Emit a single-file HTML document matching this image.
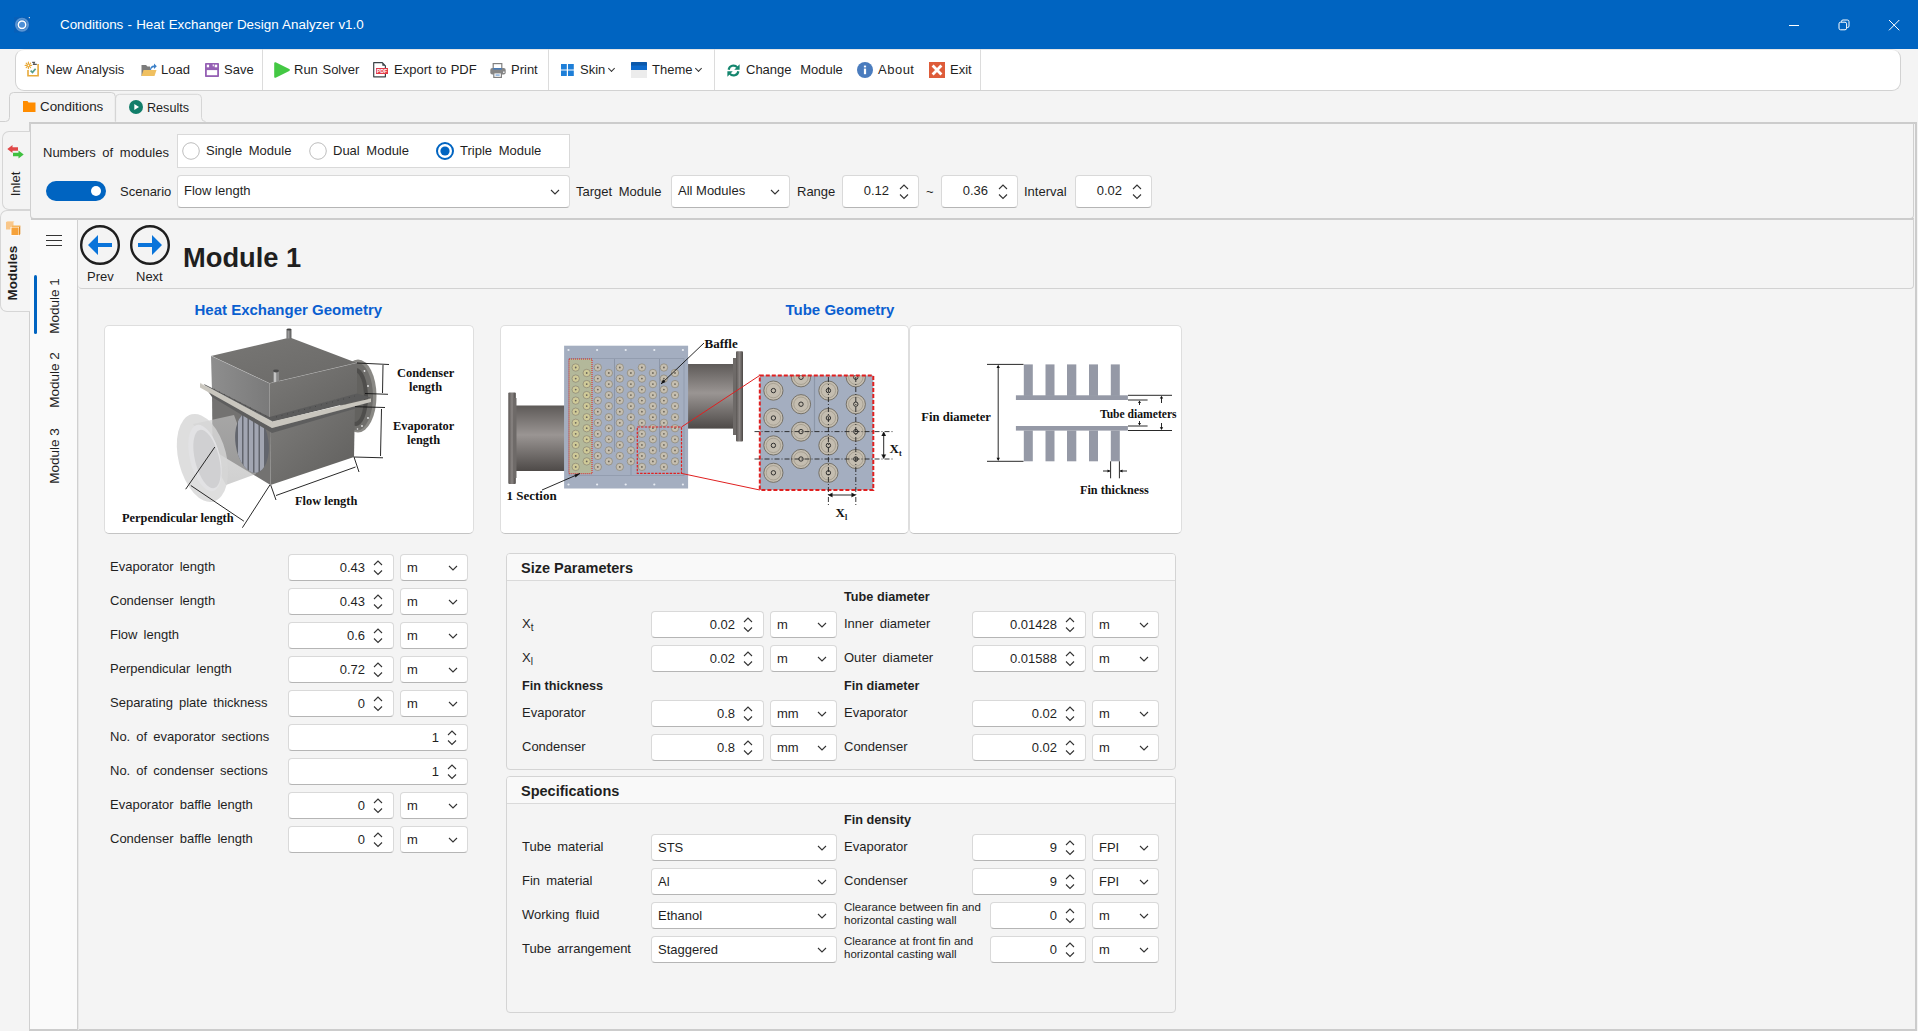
<!DOCTYPE html>
<html><head><meta charset="utf-8">
<style>
*{box-sizing:border-box;margin:0;padding:0}
html,body{width:1918px;height:1031px;overflow:hidden;background:#f4f4f4;font-family:"Liberation Sans",sans-serif;font-size:13px;color:#1f1f1f}
.a{position:absolute}
.t{position:absolute;white-space:nowrap;line-height:16px}
#title{left:0;top:0;width:1918px;height:49px;background:#0064c1}
#toolbar{left:15px;top:49px;width:1886px;height:42px;background:#fff;border:1px solid #d2d2d2;border-top-color:#e6e6e6;border-radius:9px}
.sep{position:absolute;top:49px;width:1px;height:41px;background:#dcdcdc}
.tab{position:absolute;border:1px solid #d6d6d6;border-bottom:none;border-radius:7px 7px 0 0;background:#f4f4f4}
.box{position:absolute;background:#fff;border:1px solid #d9d9d9;border-bottom-color:#b5b5b5;border-radius:3px}
.chev{position:absolute;width:7px;height:7px;border-right:1.3px solid #333;border-bottom:1.3px solid #333;transform:rotate(45deg)}
.spin{position:absolute;width:10px;height:16px}
.lbl{position:absolute;white-space:nowrap;line-height:16px;transform:translateY(-8px)}
.grp{position:absolute;border:1px solid #d4d4d4;border-radius:4px;background:#f4f4f4}
.card{position:absolute;background:#fff;border:1px solid #dedede;border-bottom-color:#c4c4c4;border-radius:5px}
</style></head><body>
<!-- TITLE BAR -->
<div id="title" class="a"></div>
<svg class="a" style="left:14px;top:17px" width="16" height="16" viewBox="0 0 16 16"><rect x="0" y="0" width="16" height="15.5" fill="#075fb8"/><circle cx="8" cy="7.8" r="6" fill="none" stroke="#9cc0ea" stroke-width="2" opacity=".55"/><circle cx="8" cy="7.8" r="3.8" fill="#4d8fd6" stroke="#fff" stroke-width="1.5"/><circle cx="15.5" cy="0.5" r=".8" fill="#c8d8e8"/></svg>
<div class="t" style="left:60px;top:17px;color:#fff;font-size:13.4px;word-spacing:0.5px">Conditions - Heat Exchanger Design Analyzer v1.0</div>
<div class="a" style="left:1789px;top:25px;width:10px;height:1px;background:#fff"></div>
<svg class="a" style="left:1838px;top:19px" width="12" height="12" viewBox="0 0 12 12"><rect x="1" y="3.2" width="7.6" height="7.6" rx="1.6" fill="none" stroke="#fff" stroke-width="1"/><path d="M3.4 3.2 V2.6 a1.6 1.6 0 0 1 1.6-1.6 H9.4 a1.6 1.6 0 0 1 1.6 1.6 V7 a1.6 1.6 0 0 1-1.6 1.6 H8.6" fill="none" stroke="#fff" stroke-width="1"/></svg>
<svg class="a" style="left:1888px;top:19px" width="12" height="12" viewBox="0 0 12 12"><path d="M1 1 L11.3 11.3 M11.3 1 L1 11.3" stroke="#fff" stroke-width="1"/></svg>

<!-- TOOLBAR -->
<div id="toolbar" class="a"></div>
<div class="sep" style="left:262px"></div>
<div class="sep" style="left:548px"></div>
<div class="sep" style="left:714px"></div>
<div class="sep" style="left:980px"></div>
<!-- new analysis icon -->
<svg class="a" style="left:22px;top:59px" width="20" height="20" viewBox="0 0 20 20"><path d="M6 11 V16.8 H16.1 V5" fill="none" stroke="#e8aa3a" stroke-width="1.6"/><path d="M8.6 11.6 L10.5 13.4 L13.6 9.8" fill="none" stroke="#5a9e88" stroke-width="1.7"/><g stroke="#e8aa3a" stroke-width="1.2" stroke-linecap="round"><path d="M6.4 3.2 V4.8 M6.4 8 V9.6 M3.2 6.4 H4.8 M8 6.4 H9.6"/><path d="M4.2 4.2 L4.6 4.6 M8.2 8.2 L8.6 8.6 M8.6 4.2 L8.2 4.6 M4.2 8.6 L4.6 8.2"/></g><circle cx="6.4" cy="6.4" r="1.4" fill="none" stroke="#e8aa3a" stroke-width="1.1"/><path d="M10.2 3.4 H12.4 L11.5 5.4 H14.8" fill="none" stroke="#555" stroke-width="1.2"/></svg>
<div class="t" style="left:46px;top:62px;word-spacing:1px">New Analysis</div>
<!-- load icon -->
<svg class="a" style="left:141px;top:62px" width="16" height="15" viewBox="0 0 16 15"><path d="M0.5 3 H5 L6.5 4.5 H9 V14 H0.5 Z" fill="#7c7c7c"/><path d="M2.5 8 H15.5 L13.5 14 H0.5 Z" fill="#f0c060"/><path d="M9 8 C9 5 10.5 3.5 13 3.5 V1.5 L15.8 4.3 L13 7 V5.2 C11.5 5.2 10.3 6 10 8" fill="#3a7fc8"/></svg>
<div class="t" style="left:161px;top:62px">Load</div>
<!-- save icon -->
<svg class="a" style="left:205px;top:63px" width="14" height="14" viewBox="0 0 14 14"><rect x="0" y="0" width="14" height="14" rx="0.8" fill="#9560b4"/><rect x="1.8" y="1.7" width="2.3" height="2.6" fill="#fff"/><rect x="9.7" y="1.7" width="2.5" height="2.6" fill="#fff"/><rect x="7.7" y="1.4" width="1.1" height="1.9" fill="#fff"/><rect x="1.8" y="7.1" width="10.4" height="5.1" fill="#fff"/></svg>
<div class="t" style="left:224px;top:62px">Save</div>
<!-- run icon -->
<svg class="a" style="left:274px;top:62px" width="16" height="16" viewBox="0 0 16 16"><path d="M1.2 1.2 L14.8 8 L1.2 14.8 Z" fill="#44c844" stroke="#44c844" stroke-linejoin="round" stroke-width="2"/></svg>
<div class="t" style="left:294px;top:62px;word-spacing:1px">Run Solver</div>
<!-- pdf icon -->
<svg class="a" style="left:373px;top:62px" width="16" height="16" viewBox="0 0 16 16"><path d="M0.7 0.7 H9.3 L12.4 3.8 V14.8 H0.7 Z" fill="#fff" stroke="#3c4448" stroke-width="1.2" stroke-linejoin="round"/><path d="M9.3 0.7 V3.8 H12.4 Z" fill="#3c4448"/><rect x="3" y="6" width="12" height="6" fill="#e23a48"/><text x="9" y="11" font-size="5.2" font-family="Liberation Sans" font-weight="bold" fill="#fff" text-anchor="middle">PDF</text></svg>
<div class="t" style="left:394px;top:62px;word-spacing:0.5px">Export to PDF</div>
<!-- print icon -->
<svg class="a" style="left:490px;top:63px" width="16" height="15" viewBox="0 0 16 15"><rect x="3.2" y="0.6" width="8.6" height="6" fill="#fff" stroke="#808080" stroke-width="1.2"/><rect x="0.3" y="5" width="15.4" height="6.5" rx="2" fill="#858585"/><rect x="3.2" y="5.2" width="8.6" height="1.3" fill="#3a78c0"/><rect x="13" y="8.6" width="1.6" height="1.2" fill="#fff"/><rect x="3.8" y="9.8" width="7.6" height="4.6" fill="#fff" stroke="#808080" stroke-width="1.2"/><rect x="5.5" y="11.6" width="4.2" height="0.9" fill="#3a78c0"/></svg>
<div class="t" style="left:511px;top:62px">Print</div>
<!-- skin icon -->
<svg class="a" style="left:561px;top:64px" width="13" height="12" viewBox="0 0 13 12"><rect x="0" y="0" width="5.8" height="5.5" fill="#1e7fd8"/><rect x="7" y="0" width="5.8" height="5.5" fill="#1e7fd8"/><rect x="0" y="6.5" width="5.8" height="5.5" fill="#1e7fd8"/><rect x="7" y="6.5" width="5.8" height="5.5" fill="#1e7fd8"/></svg>
<div class="t" style="left:580px;top:62px">Skin</div>
<div class="chev" style="left:609px;top:66px;width:5px;height:5px;border-width:1.1px"></div>
<!-- theme icon -->
<svg class="a" style="left:631px;top:62px" width="16" height="16" viewBox="0 0 16 16"><rect x="0" y="0" width="16" height="8" rx="0.5" fill="#0b58aa"/><rect x="0" y="3.5" width="16" height="4.5" fill="#0d6acc"/><rect x="0" y="8" width="16" height="8" fill="#ececec"/></svg>
<div class="t" style="left:652px;top:62px">Theme</div>
<div class="chev" style="left:696px;top:66px;width:5px;height:5px;border-width:1.1px"></div>
<!-- change module icon -->
<svg class="a" style="left:726.5px;top:63.5px" width="13" height="13" viewBox="0 0 14 14"><path d="M1.8 6.2 A5.2 5.2 0 0 1 11 3.6" fill="none" stroke="#14866e" stroke-width="2.4"/><path d="M13.6 0.4 V6.2 H7.8 Z" fill="#14866e"/><path d="M12.2 7.8 A5.2 5.2 0 0 1 3 10.4" fill="none" stroke="#14866e" stroke-width="2.4"/><path d="M0.4 13.6 V7.8 H6.2 Z" fill="#14866e"/></svg>
<div class="t" style="left:746px;top:62px;word-spacing:5px">Change Module</div>
<!-- about icon -->
<svg class="a" style="left:857px;top:62px" width="16" height="16" viewBox="0 0 16 16"><circle cx="8" cy="8" r="8" fill="#4a7cbe"/><rect x="6.9" y="6.6" width="2.2" height="5.6" fill="#fff"/><rect x="6.9" y="3.6" width="2.2" height="1.8" fill="#fff"/></svg>
<div class="t" style="left:878px;top:62px;letter-spacing:0.5px">About</div>
<!-- exit icon -->
<svg class="a" style="left:929px;top:62px" width="16" height="16" viewBox="0 0 16 16"><rect x="0" y="0" width="16" height="16" fill="#de5c3a"/><path d="M3.6 3.6 L12.4 12.4 M12.4 3.6 L3.6 12.4" stroke="#fff" stroke-width="2.8"/></svg>
<div class="t" style="left:950px;top:62px">Exit</div>

<!-- TABS -->
<svg class="a" style="left:0;top:88px" width="220" height="36" viewBox="0 88 220 36"><path d="M0 121.5 H5.5 A4 4 0 0 0 9.5 117.5 V96.5 A4 4 0 0 1 13.5 92.5 H111.3 A4 4 0 0 1 115.3 96.5 V121.5" fill="none" stroke="#d0d0d0" stroke-width="1"/><path d="M115.6 121.5 V98.3 A4 4 0 0 1 119.6 94.3 H197.5 A4 4 0 0 1 201.5 98.3 V117.5 A4 4 0 0 0 205.5 121.5" fill="none" stroke="#d6d6d6" stroke-width="1"/></svg>
<svg class="a" style="left:23px;top:101px" width="13" height="11" viewBox="0 0 13 11"><path d="M0 0 H4.5 L5.5 1.5 H12.5 V11 H0 Z" fill="#ff8c00"/></svg>
<div class="t" style="left:40px;top:99px;font-size:13.4px">Conditions</div>
<svg class="a" style="left:129px;top:100px" width="14" height="14" viewBox="0 0 14 14"><circle cx="7" cy="7" r="7" fill="#127e6a"/><path d="M5.3 4 L10 7 L5.3 10 Z" fill="#fff"/></svg>
<div class="t" style="left:147px;top:100px;font-size:12.6px">Results</div>

<!-- OUTER PANEL -->
<div class="a" style="left:29px;top:122px;width:1888px;height:909px;border:2px solid #cccccc;border-left:1px solid #d0d0d0;border-right-width:2px"></div>
<!-- left vertical tabs -->
<div class="a" style="left:2px;top:131px;width:28px;height:79px;border:1px solid #d6d6d6;border-right:none;border-radius:7px 0 0 7px;background:#f4f4f4"></div>
<svg class="a" style="left:7px;top:145px" width="17" height="14" viewBox="0 0 17 14"><path d="M0.3 4 L5.5 0 V2.2 H11 V5.8 H5.5 V8 Z" fill="#e04848"/><path d="M16.7 9.5 L11.5 5.5 V7.7 H6 V11.3 H11.5 V13.5 Z" fill="#40c040"/></svg>
<div class="t" style="left:-4px;top:176px;width:40px;text-align:center;transform:rotate(-90deg);font-size:13px">Inlet</div>
<div class="a" style="left:0px;top:210px;width:30px;height:102px;border:1px solid #d6d6d6;border-right:none;border-radius:7px 0 0 7px;background:#f5f5f5"></div>
<svg class="a" style="left:5px;top:221px" width="16" height="16" viewBox="0 0 16 16"><path d="M1 1 H8.5 V8.5 H1 Z" fill="#f9c78a"/><path d="M1 1 L2.5 0 H9.5 L8.5 1 Z" fill="#fbd9ae"/><path d="M6 6 H14 V14.5 H6 Z" fill="#f6a23a" stroke="#fff" stroke-width=".9"/><path d="M6 6 L7.5 4.5 H15.3 L14 6 Z" fill="#f8b55a"/><path d="M14 6 L15.3 4.5 V13 L14 14.5 Z" fill="#e08a20"/></svg>
<div class="t" style="left:-17px;top:265px;width:60px;text-align:center;transform:rotate(-90deg);font-size:13.5px;font-weight:bold">Modules</div>
<!-- settings panel -->
<div class="a" style="left:30px;top:123px;width:1884px;height:96px;border:1px solid #cfcfcf;border-top:none;border-radius:0 0 4px 4px"></div>
<div class="a" style="left:31px;top:218px;width:1883px;height:2px;background:#cccccc"></div>
<!-- nav panel -->
<div class="a" style="left:30px;top:220px;width:47px;height:809px;background:#fafafa"></div>
<div class="a" style="left:77px;top:219px;width:1px;height:811px;background:#d0d0d0"></div><div class="a" style="left:78px;top:289px;width:1px;height:741px;background:#e8e8e8"></div>
<!-- header panel -->
<div class="a" style="left:78px;top:219px;width:1836px;height:70px;border:1px solid #d2d2d2;border-top:none;border-left:none;border-radius:0 0 4px 4px"></div>


<div class="t" style="left:43px;top:145px;word-spacing:3px">Numbers of modules</div>
<div class="a" style="left:177px;top:134px;width:393px;height:34px;background:#fff;border:1px solid #d9d9d9"></div>
<svg class="a" style="left:182px;top:142px" width="18" height="18" viewBox="0 0 18 18"><circle cx="9" cy="9" r="8.3" fill="#fff" stroke="#bdbdbd" stroke-width="1"/></svg>
<div class="t" style="left:206px;top:143px;word-spacing:3px">Single Module</div>
<svg class="a" style="left:309px;top:142px" width="18" height="18" viewBox="0 0 18 18"><circle cx="9" cy="9" r="8.3" fill="#fff" stroke="#bdbdbd" stroke-width="1"/></svg>
<div class="t" style="left:333px;top:143px;word-spacing:3px">Dual Module</div>
<svg class="a" style="left:436px;top:142px" width="18" height="18" viewBox="0 0 18 18"><circle cx="9" cy="9" r="8" fill="#fff" stroke="#0064c1" stroke-width="2"/><circle cx="9" cy="9" r="4.6" fill="#0064c1"/></svg>
<div class="t" style="left:460px;top:143px;word-spacing:3px">Triple Module</div>
<div class="a" style="left:46px;top:181px;width:60px;height:20px;border-radius:10px;background:#0064c1"></div>
<div class="a" style="left:91px;top:186px;width:10px;height:10px;border-radius:5px;background:#fff"></div>
<div class="t" style="left:120px;top:184px">Scenario</div>
<div class="box" style="left:177px;top:175px;width:393px;height:33px;border-radius:4px"></div>
<div class="t" style="left:184px;top:183px">Flow length</div>
<svg class="a" style="left:549.5px;top:188.5px" width="10" height="6.0" viewBox="-1 -1 10 6.0"><path d="M0 0 L4.0 4.0 L8 0" fill="none" stroke="#333" stroke-width="1.1"/></svg>
<div class="t" style="left:576px;top:184px;word-spacing:3px">Target Module</div>
<div class="box" style="left:671px;top:175px;width:119px;height:33px;border-radius:4px"></div>
<div class="t" style="left:678px;top:183px">All Modules</div>
<svg class="a" style="left:769.5px;top:188.5px" width="10" height="6.0" viewBox="-1 -1 10 6.0"><path d="M0 0 L4.0 4.0 L8 0" fill="none" stroke="#333" stroke-width="1.1"/></svg>
<div class="t" style="left:797px;top:184px">Range</div>
<div class="box" style="left:842px;top:175px;width:77px;height:33px;border-radius:4px"></div>
<div class="t" style="right:1029px;top:183px">0.12</div>
<svg class="a" style="left:899px;top:183.5px" width="10" height="16" viewBox="-1 -1 10 16"><path d="M0 4 L4 0 L8 4 M0 9.5 L4 13.5 L8 9.5" fill="none" stroke="#333" stroke-width="1.1"/></svg>
<div class="box" style="left:941px;top:175px;width:77px;height:33px;border-radius:4px"></div>
<div class="t" style="right:930px;top:183px">0.36</div>
<svg class="a" style="left:998px;top:183.5px" width="10" height="16" viewBox="-1 -1 10 16"><path d="M0 4 L4 0 L8 4 M0 9.5 L4 13.5 L8 9.5" fill="none" stroke="#333" stroke-width="1.1"/></svg>
<div class="box" style="left:1075px;top:175px;width:77px;height:33px;border-radius:4px"></div>
<div class="t" style="right:796px;top:183px">0.02</div>
<svg class="a" style="left:1132px;top:183.5px" width="10" height="16" viewBox="-1 -1 10 16"><path d="M0 4 L4 0 L8 4 M0 9.5 L4 13.5 L8 9.5" fill="none" stroke="#333" stroke-width="1.1"/></svg>
<div class="t" style="left:926px;top:184px">~</div>
<div class="t" style="left:1024px;top:184px">Interval</div>
<div class="a" style="left:46px;top:235px;width:16px;height:1.2px;background:#333"></div>
<div class="a" style="left:46px;top:240px;width:16px;height:1.2px;background:#333"></div>
<div class="a" style="left:46px;top:245px;width:16px;height:1.2px;background:#333"></div>
<div class="a" style="left:34px;top:275px;width:3px;height:59px;border-radius:1.5px;background:#0064c1"></div>
<div class="t" style="left:19.700000000000003px;top:297.5px;width:70px;text-align:center;transform:rotate(-90deg);font-size:13.5px">Module 1</div>
<div class="t" style="left:19.700000000000003px;top:372px;width:70px;text-align:center;transform:rotate(-90deg);font-size:13.5px">Module 2</div>
<div class="t" style="left:19.700000000000003px;top:447.6px;width:70px;text-align:center;transform:rotate(-90deg);font-size:13.5px">Module 3</div>
<svg class="a" style="left:80px;top:225px" width="40" height="40" viewBox="0 0 40 40"><circle cx="20" cy="20" r="18.8" fill="none" stroke="#1e1e1e" stroke-width="2.4"/><path d="M8 20 L18 10 L18 18 L32 18 L32 22 L18 22 L18 30 Z" fill="#0a74da"/></svg>
<svg class="a" style="left:130px;top:225px" width="40" height="40" viewBox="0 0 40 40"><circle cx="20" cy="20" r="18.8" fill="none" stroke="#1e1e1e" stroke-width="2.4"/><path d="M32 20 L22 10 L22 18 L8 18 L8 22 L22 22 L22 30 Z" fill="#0a74da"/></svg>
<div class="t" style="left:87px;top:269px">Prev</div>
<div class="t" style="left:136px;top:269px">Next</div>
<div class="t" style="left:183px;top:242px;font-size:27.3px;font-weight:bold;line-height:32px">Module 1</div>
<div class="t" style="left:194.5px;top:301px;font-size:15px;font-weight:bold;color:#0a5fd0;line-height:18px">Heat Exchanger Geometry</div>
<div class="t" style="left:785.5px;top:301px;font-size:15px;font-weight:bold;color:#0a5fd0;line-height:18px">Tube Geometry</div>
<div class="card" style="left:104px;top:325px;width:370px;height:209px"></div>
<div class="card" style="left:500px;top:325px;width:409px;height:209px"></div>
<div class="card" style="left:909px;top:325px;width:273px;height:209px"></div>
<svg class="a" style="left:105px;top:326px" width="368" height="206" viewBox="105 326 368 206" font-family="Liberation Serif" font-weight="bold">
<defs>
<linearGradient id="g1top" x1="0" y1="0" x2="1" y2="1"><stop offset="0" stop-color="#787775"/><stop offset="1" stop-color="#6a6967"/></linearGradient>
<linearGradient id="g1left" x1="0" y1="0" x2="1" y2="0"><stop offset="0" stop-color="#8e8e8e"/><stop offset="1" stop-color="#7a7a7a"/></linearGradient>
<linearGradient id="g1right" x1="0" y1="0" x2="1" y2="1"><stop offset="0" stop-color="#7b7a78"/><stop offset="1" stop-color="#636260"/></linearGradient>
<linearGradient id="g1low" x1="0" y1="0" x2="1" y2="1"><stop offset="0" stop-color="#7e7d7b"/><stop offset="1" stop-color="#5f5e5c"/></linearGradient>
<linearGradient id="g1pipe" x1="0" y1="0" x2="0" y2="1"><stop offset="0" stop-color="#c9c9c9"/><stop offset="1" stop-color="#b0b0b0"/></linearGradient>
</defs>
<!-- right flange (behind) -->
<ellipse cx="358" cy="396" rx="18.5" ry="36.5" fill="#8a8985"/>
<ellipse cx="357" cy="396.5" rx="16" ry="34" fill="#6f6e6b"/>
<ellipse cx="356" cy="397" rx="12" ry="29" fill="#4f4e4c"/>
<ellipse cx="355" cy="397" rx="9" ry="25" fill="#63625f"/>
<g fill="#e8e8e8"><circle cx="364.5" cy="371" r=".9"/><circle cx="368" cy="386" r=".9"/><circle cx="368" cy="418" r=".9"/><circle cx="362" cy="426" r=".9"/><circle cx="357.5" cy="429" r=".8"/></g>
<!-- top face -->
<polygon points="211,356 290,337.5 357,363 269.5,383.6" fill="url(#g1top)"/>
<line x1="211" y1="356" x2="269.5" y2="383.6" stroke="#d8d8d8" stroke-width=".8"/>
<line x1="269.5" y1="383.6" x2="357" y2="363" stroke="#c8c8c8" stroke-width=".8"/>
<!-- nozzles -->
<rect x="286.5" y="329.5" width="5" height="9" fill="#6a6a6a"/><rect x="287.5" y="329.5" width="2" height="9" fill="#9a9a9a"/><ellipse cx="289" cy="329.5" rx="2.5" ry="1.1" fill="#444"/>
<rect x="273" y="371" width="6" height="11.5" fill="#8a8a8a"/><rect x="274" y="371" width="2.2" height="11.5" fill="#c4c4c4"/><ellipse cx="276" cy="371" rx="3" ry="1.4" fill="#4a4a4a"/>
<!-- upper left face -->
<polygon points="211,356 269.5,383.6 269.5,421 212,391" fill="url(#g1left)"/>
<!-- upper right face -->
<polygon points="269.5,383.6 357,363 357,394 269.5,418" fill="url(#g1right)"/>
<!-- lower left face -->
<polygon points="212,390 270,426 270.5,485 212.5,450" fill="#737271"/>
<!-- lower right face -->
<polygon points="270,426 355,403 354,457 270.5,485" fill="url(#g1low)"/>
<!-- left pipe translucent -->
<polygon points="193,424 234,415 256,474 226,485" fill="url(#g1pipe)" opacity=".6"/>
<!-- tube opening -->
<clipPath id="c1op"><ellipse cx="252" cy="442.5" rx="16.5" ry="30.5" transform="rotate(-8 252 442.5)"/></clipPath>
<ellipse cx="252" cy="442.5" rx="16.5" ry="30.5" transform="rotate(-8 252 442.5)" fill="#62656d"/>
<g clip-path="url(#c1op)" stroke="#a2a6b2" stroke-width="4">
<line x1="240" y1="410" x2="240" y2="475"/><line x1="245.5" y1="410" x2="245.5" y2="475"/><line x1="251" y1="410" x2="251" y2="475"/><line x1="256.5" y1="410" x2="256.5" y2="475"/><line x1="262" y1="410" x2="262" y2="475"/>
</g>
<!-- flange dark band -->
<polygon points="204,384 269.5,417 357,393.5 371,397.5 272,422 206,388" fill="#5b5b5b"/>
<polygon points="207,390 272,428 365,404 354,409 272,433 212,397" fill="#5e5e5e"/>
<!-- flange light strip -->
<polygon points="200,383 272,421.5 371,398.5 371,402 272,428 200,387.5" fill="#c9c6be"/>
<line x1="200" y1="383" x2="272" y2="421.5" stroke="#e2e0da" stroke-width=".6"/>
<line x1="214" y1="389" x2="268" y2="417" stroke="#333" stroke-width=".7" stroke-dasharray=".8 5"/>
<line x1="276" y1="417" x2="355" y2="396" stroke="#333" stroke-width=".7" stroke-dasharray=".8 5"/>
<!-- left flange -->
<ellipse cx="202.5" cy="458" rx="24" ry="45" transform="rotate(-14 202.5 458)" fill="#d6d6d6" opacity=".8"/>
<ellipse cx="205" cy="458" rx="15" ry="34" transform="rotate(-14 205 458)" fill="#e2e2e4"/>
<ellipse cx="207" cy="459" rx="12" ry="30" transform="rotate(-14 207 459)" fill="#d0d0d2"/>
<!-- dimension lines -->
<g stroke="#111" stroke-width=".9" fill="none">
<line x1="357" y1="363" x2="389" y2="364.5"/><line x1="365" y1="393.5" x2="388" y2="394.3"/><line x1="383" y1="365" x2="382.5" y2="393"/>
<line x1="355" y1="406.7" x2="385" y2="407.5"/><line x1="354" y1="457" x2="383" y2="457.8"/><line x1="381.5" y1="409" x2="380.5" y2="456"/>
<line x1="354" y1="457" x2="359" y2="472"/><line x1="270.7" y1="485" x2="276" y2="500"/><line x1="276" y1="495.5" x2="355.5" y2="467"/>
<line x1="214.8" y1="447" x2="185.7" y2="489.2"/><line x1="270" y1="484.8" x2="242.4" y2="527.7"/><line x1="190.8" y1="485.5" x2="243.9" y2="521.2"/>
</g>
<g fill="#111" font-size="12.4">
<text x="397" y="376.5">Condenser</text><text x="409" y="390.5">length</text>
<text x="393" y="429.5">Evaporator</text><text x="407" y="443.5">length</text>
<text x="295" y="505">Flow length</text>
<text x="122" y="522">Perpendicular length</text>
</g>
</svg>

<svg class="a" style="left:501px;top:326px" width="407" height="206" viewBox="501 326 407 206" font-family="Liberation Serif" font-weight="bold">
<defs>
<linearGradient id="g2pipe" x1="0" y1="0" x2="0" y2="1"><stop offset="0" stop-color="#5e5a58"/><stop offset=".45" stop-color="#9a9593"/><stop offset="1" stop-color="#4e4a48"/></linearGradient>
<linearGradient id="g2fl" x1="0" y1="0" x2="1" y2="0"><stop offset="0" stop-color="#5a5654"/><stop offset=".5" stop-color="#8a8583"/><stop offset="1" stop-color="#4a4644"/></linearGradient>
</defs>
<rect x="515.7" y="405.5" width="49" height="65.5" fill="url(#g2pipe)"/>
<rect x="508.3" y="392.6" width="7.5" height="91.3" rx="1" fill="url(#g2fl)"/>
<rect x="513.5" y="398" width="3" height="80" fill="#6e6a68"/>
<rect x="688" y="364" width="48" height="64.6" fill="url(#g2pipe)"/>
<rect x="736" y="351.2" width="7" height="90.3" rx="1" fill="url(#g2fl)"/>
<rect x="733" y="358" width="3" height="77" fill="#6e6a68"/>
<rect x="564.1" y="345.7" width="124" height="142.8" fill="#a4aec0"/>
<rect x="569" y="358.6" width="115" height="117" fill="none" stroke="#8f99ab" stroke-width=".8"/>
<circle cx="568.5" cy="350" r="1.1" fill="#e8ecf2"/><circle cx="568.5" cy="484.5" r="1.1" fill="#e8ecf2"/>
<circle cx="597.1" cy="350" r="1.1" fill="#e8ecf2"/><circle cx="597.1" cy="484.5" r="1.1" fill="#e8ecf2"/>
<circle cx="625.7" cy="350" r="1.1" fill="#e8ecf2"/><circle cx="625.7" cy="484.5" r="1.1" fill="#e8ecf2"/>
<circle cx="654.3" cy="350" r="1.1" fill="#e8ecf2"/><circle cx="654.3" cy="484.5" r="1.1" fill="#e8ecf2"/>
<circle cx="682.9" cy="350" r="1.1" fill="#e8ecf2"/><circle cx="682.9" cy="484.5" r="1.1" fill="#e8ecf2"/>
<rect x="569" y="359" width="23" height="114.7" fill="#b3b89a"/>
<line x1="614.5" y1="359" x2="614.5" y2="452" stroke="#8c96a8" stroke-width="1"/>
<line x1="631" y1="384" x2="631" y2="475" stroke="#8c96a8" stroke-width="1"/>
<line x1="659.5" y1="359" x2="659.5" y2="452" stroke="#8c96a8" stroke-width="1"/>
<circle cx="575.7" cy="367.5" r="3.7" fill="#cfca98" stroke="#8a8474" stroke-width=".7"/><circle cx="575.7" cy="367.5" r=".9" fill="#6a655a"/>
<circle cx="575.7" cy="378.6" r="3.7" fill="#cfca98" stroke="#8a8474" stroke-width=".7"/><circle cx="575.7" cy="378.6" r=".9" fill="#6a655a"/>
<circle cx="575.7" cy="389.6" r="3.7" fill="#cfca98" stroke="#8a8474" stroke-width=".7"/><circle cx="575.7" cy="389.6" r=".9" fill="#6a655a"/>
<circle cx="575.7" cy="400.6" r="3.7" fill="#cfca98" stroke="#8a8474" stroke-width=".7"/><circle cx="575.7" cy="400.6" r=".9" fill="#6a655a"/>
<circle cx="575.7" cy="411.7" r="3.7" fill="#cfca98" stroke="#8a8474" stroke-width=".7"/><circle cx="575.7" cy="411.7" r=".9" fill="#6a655a"/>
<circle cx="575.7" cy="422.8" r="3.7" fill="#cfca98" stroke="#8a8474" stroke-width=".7"/><circle cx="575.7" cy="422.8" r=".9" fill="#6a655a"/>
<circle cx="575.7" cy="433.8" r="3.7" fill="#cfca98" stroke="#8a8474" stroke-width=".7"/><circle cx="575.7" cy="433.8" r=".9" fill="#6a655a"/>
<circle cx="575.7" cy="444.9" r="3.7" fill="#cfca98" stroke="#8a8474" stroke-width=".7"/><circle cx="575.7" cy="444.9" r=".9" fill="#6a655a"/>
<circle cx="575.7" cy="455.9" r="3.7" fill="#cfca98" stroke="#8a8474" stroke-width=".7"/><circle cx="575.7" cy="455.9" r=".9" fill="#6a655a"/>
<circle cx="575.7" cy="466.9" r="3.7" fill="#cfca98" stroke="#8a8474" stroke-width=".7"/><circle cx="575.7" cy="466.9" r=".9" fill="#6a655a"/>
<circle cx="586.7" cy="373.0" r="3.7" fill="#cfca98" stroke="#8a8474" stroke-width=".7"/><circle cx="586.7" cy="373.0" r=".9" fill="#6a655a"/>
<circle cx="586.7" cy="384.1" r="3.7" fill="#cfca98" stroke="#8a8474" stroke-width=".7"/><circle cx="586.7" cy="384.1" r=".9" fill="#6a655a"/>
<circle cx="586.7" cy="395.1" r="3.7" fill="#cfca98" stroke="#8a8474" stroke-width=".7"/><circle cx="586.7" cy="395.1" r=".9" fill="#6a655a"/>
<circle cx="586.7" cy="406.1" r="3.7" fill="#cfca98" stroke="#8a8474" stroke-width=".7"/><circle cx="586.7" cy="406.1" r=".9" fill="#6a655a"/>
<circle cx="586.7" cy="417.2" r="3.7" fill="#cfca98" stroke="#8a8474" stroke-width=".7"/><circle cx="586.7" cy="417.2" r=".9" fill="#6a655a"/>
<circle cx="586.7" cy="428.2" r="3.7" fill="#cfca98" stroke="#8a8474" stroke-width=".7"/><circle cx="586.7" cy="428.2" r=".9" fill="#6a655a"/>
<circle cx="586.7" cy="439.3" r="3.7" fill="#cfca98" stroke="#8a8474" stroke-width=".7"/><circle cx="586.7" cy="439.3" r=".9" fill="#6a655a"/>
<circle cx="586.7" cy="450.4" r="3.7" fill="#cfca98" stroke="#8a8474" stroke-width=".7"/><circle cx="586.7" cy="450.4" r=".9" fill="#6a655a"/>
<circle cx="586.7" cy="461.4" r="3.7" fill="#cfca98" stroke="#8a8474" stroke-width=".7"/><circle cx="586.7" cy="461.4" r=".9" fill="#6a655a"/>
<circle cx="597.8" cy="367.5" r="3.7" fill="#c6bfb0" stroke="#8a8474" stroke-width=".7"/><circle cx="597.8" cy="367.5" r=".9" fill="#6a655a"/>
<circle cx="597.8" cy="378.6" r="3.7" fill="#c6bfb0" stroke="#8a8474" stroke-width=".7"/><circle cx="597.8" cy="378.6" r=".9" fill="#6a655a"/>
<circle cx="597.8" cy="389.6" r="3.7" fill="#c6bfb0" stroke="#8a8474" stroke-width=".7"/><circle cx="597.8" cy="389.6" r=".9" fill="#6a655a"/>
<circle cx="597.8" cy="400.6" r="3.7" fill="#c6bfb0" stroke="#8a8474" stroke-width=".7"/><circle cx="597.8" cy="400.6" r=".9" fill="#6a655a"/>
<circle cx="597.8" cy="411.7" r="3.7" fill="#c6bfb0" stroke="#8a8474" stroke-width=".7"/><circle cx="597.8" cy="411.7" r=".9" fill="#6a655a"/>
<circle cx="597.8" cy="422.8" r="3.7" fill="#c6bfb0" stroke="#8a8474" stroke-width=".7"/><circle cx="597.8" cy="422.8" r=".9" fill="#6a655a"/>
<circle cx="597.8" cy="433.8" r="3.7" fill="#c6bfb0" stroke="#8a8474" stroke-width=".7"/><circle cx="597.8" cy="433.8" r=".9" fill="#6a655a"/>
<circle cx="597.8" cy="444.9" r="3.7" fill="#c6bfb0" stroke="#8a8474" stroke-width=".7"/><circle cx="597.8" cy="444.9" r=".9" fill="#6a655a"/>
<circle cx="597.8" cy="455.9" r="3.7" fill="#c6bfb0" stroke="#8a8474" stroke-width=".7"/><circle cx="597.8" cy="455.9" r=".9" fill="#6a655a"/>
<circle cx="597.8" cy="466.9" r="3.7" fill="#c6bfb0" stroke="#8a8474" stroke-width=".7"/><circle cx="597.8" cy="466.9" r=".9" fill="#6a655a"/>
<circle cx="608.8" cy="373.0" r="3.7" fill="#c6bfb0" stroke="#8a8474" stroke-width=".7"/><circle cx="608.8" cy="373.0" r=".9" fill="#6a655a"/>
<circle cx="608.8" cy="384.1" r="3.7" fill="#c6bfb0" stroke="#8a8474" stroke-width=".7"/><circle cx="608.8" cy="384.1" r=".9" fill="#6a655a"/>
<circle cx="608.8" cy="395.1" r="3.7" fill="#c6bfb0" stroke="#8a8474" stroke-width=".7"/><circle cx="608.8" cy="395.1" r=".9" fill="#6a655a"/>
<circle cx="608.8" cy="406.1" r="3.7" fill="#c6bfb0" stroke="#8a8474" stroke-width=".7"/><circle cx="608.8" cy="406.1" r=".9" fill="#6a655a"/>
<circle cx="608.8" cy="417.2" r="3.7" fill="#c6bfb0" stroke="#8a8474" stroke-width=".7"/><circle cx="608.8" cy="417.2" r=".9" fill="#6a655a"/>
<circle cx="608.8" cy="428.2" r="3.7" fill="#c6bfb0" stroke="#8a8474" stroke-width=".7"/><circle cx="608.8" cy="428.2" r=".9" fill="#6a655a"/>
<circle cx="608.8" cy="439.3" r="3.7" fill="#c6bfb0" stroke="#8a8474" stroke-width=".7"/><circle cx="608.8" cy="439.3" r=".9" fill="#6a655a"/>
<circle cx="608.8" cy="450.4" r="3.7" fill="#c6bfb0" stroke="#8a8474" stroke-width=".7"/><circle cx="608.8" cy="450.4" r=".9" fill="#6a655a"/>
<circle cx="608.8" cy="461.4" r="3.7" fill="#c6bfb0" stroke="#8a8474" stroke-width=".7"/><circle cx="608.8" cy="461.4" r=".9" fill="#6a655a"/>
<circle cx="619.8" cy="367.5" r="3.7" fill="#c6bfb0" stroke="#8a8474" stroke-width=".7"/><circle cx="619.8" cy="367.5" r=".9" fill="#6a655a"/>
<circle cx="619.8" cy="378.6" r="3.7" fill="#c6bfb0" stroke="#8a8474" stroke-width=".7"/><circle cx="619.8" cy="378.6" r=".9" fill="#6a655a"/>
<circle cx="619.8" cy="389.6" r="3.7" fill="#c6bfb0" stroke="#8a8474" stroke-width=".7"/><circle cx="619.8" cy="389.6" r=".9" fill="#6a655a"/>
<circle cx="619.8" cy="400.6" r="3.7" fill="#c6bfb0" stroke="#8a8474" stroke-width=".7"/><circle cx="619.8" cy="400.6" r=".9" fill="#6a655a"/>
<circle cx="619.8" cy="411.7" r="3.7" fill="#c6bfb0" stroke="#8a8474" stroke-width=".7"/><circle cx="619.8" cy="411.7" r=".9" fill="#6a655a"/>
<circle cx="619.8" cy="422.8" r="3.7" fill="#c6bfb0" stroke="#8a8474" stroke-width=".7"/><circle cx="619.8" cy="422.8" r=".9" fill="#6a655a"/>
<circle cx="619.8" cy="433.8" r="3.7" fill="#c6bfb0" stroke="#8a8474" stroke-width=".7"/><circle cx="619.8" cy="433.8" r=".9" fill="#6a655a"/>
<circle cx="619.8" cy="444.9" r="3.7" fill="#c6bfb0" stroke="#8a8474" stroke-width=".7"/><circle cx="619.8" cy="444.9" r=".9" fill="#6a655a"/>
<circle cx="619.8" cy="455.9" r="3.7" fill="#c6bfb0" stroke="#8a8474" stroke-width=".7"/><circle cx="619.8" cy="455.9" r=".9" fill="#6a655a"/>
<circle cx="619.8" cy="466.9" r="3.7" fill="#c6bfb0" stroke="#8a8474" stroke-width=".7"/><circle cx="619.8" cy="466.9" r=".9" fill="#6a655a"/>
<circle cx="630.9" cy="373.0" r="3.7" fill="#c6bfb0" stroke="#8a8474" stroke-width=".7"/><circle cx="630.9" cy="373.0" r=".9" fill="#6a655a"/>
<circle cx="630.9" cy="384.1" r="3.7" fill="#c6bfb0" stroke="#8a8474" stroke-width=".7"/><circle cx="630.9" cy="384.1" r=".9" fill="#6a655a"/>
<circle cx="630.9" cy="395.1" r="3.7" fill="#c6bfb0" stroke="#8a8474" stroke-width=".7"/><circle cx="630.9" cy="395.1" r=".9" fill="#6a655a"/>
<circle cx="630.9" cy="406.1" r="3.7" fill="#c6bfb0" stroke="#8a8474" stroke-width=".7"/><circle cx="630.9" cy="406.1" r=".9" fill="#6a655a"/>
<circle cx="630.9" cy="417.2" r="3.7" fill="#c6bfb0" stroke="#8a8474" stroke-width=".7"/><circle cx="630.9" cy="417.2" r=".9" fill="#6a655a"/>
<circle cx="630.9" cy="428.2" r="3.7" fill="#c6bfb0" stroke="#8a8474" stroke-width=".7"/><circle cx="630.9" cy="428.2" r=".9" fill="#6a655a"/>
<circle cx="630.9" cy="439.3" r="3.7" fill="#c6bfb0" stroke="#8a8474" stroke-width=".7"/><circle cx="630.9" cy="439.3" r=".9" fill="#6a655a"/>
<circle cx="630.9" cy="450.4" r="3.7" fill="#c6bfb0" stroke="#8a8474" stroke-width=".7"/><circle cx="630.9" cy="450.4" r=".9" fill="#6a655a"/>
<circle cx="630.9" cy="461.4" r="3.7" fill="#c6bfb0" stroke="#8a8474" stroke-width=".7"/><circle cx="630.9" cy="461.4" r=".9" fill="#6a655a"/>
<circle cx="641.9" cy="367.5" r="3.7" fill="#c6bfb0" stroke="#8a8474" stroke-width=".7"/><circle cx="641.9" cy="367.5" r=".9" fill="#6a655a"/>
<circle cx="641.9" cy="378.6" r="3.7" fill="#c6bfb0" stroke="#8a8474" stroke-width=".7"/><circle cx="641.9" cy="378.6" r=".9" fill="#6a655a"/>
<circle cx="641.9" cy="389.6" r="3.7" fill="#c6bfb0" stroke="#8a8474" stroke-width=".7"/><circle cx="641.9" cy="389.6" r=".9" fill="#6a655a"/>
<circle cx="641.9" cy="400.6" r="3.7" fill="#c6bfb0" stroke="#8a8474" stroke-width=".7"/><circle cx="641.9" cy="400.6" r=".9" fill="#6a655a"/>
<circle cx="641.9" cy="411.7" r="3.7" fill="#c6bfb0" stroke="#8a8474" stroke-width=".7"/><circle cx="641.9" cy="411.7" r=".9" fill="#6a655a"/>
<circle cx="641.9" cy="422.8" r="3.7" fill="#c6bfb0" stroke="#8a8474" stroke-width=".7"/><circle cx="641.9" cy="422.8" r=".9" fill="#6a655a"/>
<circle cx="641.9" cy="433.8" r="3.7" fill="#c6bfb0" stroke="#8a8474" stroke-width=".7"/><circle cx="641.9" cy="433.8" r=".9" fill="#6a655a"/>
<circle cx="641.9" cy="444.9" r="3.7" fill="#c6bfb0" stroke="#8a8474" stroke-width=".7"/><circle cx="641.9" cy="444.9" r=".9" fill="#6a655a"/>
<circle cx="641.9" cy="455.9" r="3.7" fill="#c6bfb0" stroke="#8a8474" stroke-width=".7"/><circle cx="641.9" cy="455.9" r=".9" fill="#6a655a"/>
<circle cx="641.9" cy="466.9" r="3.7" fill="#c6bfb0" stroke="#8a8474" stroke-width=".7"/><circle cx="641.9" cy="466.9" r=".9" fill="#6a655a"/>
<circle cx="652.9" cy="373.0" r="3.7" fill="#c6bfb0" stroke="#8a8474" stroke-width=".7"/><circle cx="652.9" cy="373.0" r=".9" fill="#6a655a"/>
<circle cx="652.9" cy="384.1" r="3.7" fill="#c6bfb0" stroke="#8a8474" stroke-width=".7"/><circle cx="652.9" cy="384.1" r=".9" fill="#6a655a"/>
<circle cx="652.9" cy="395.1" r="3.7" fill="#c6bfb0" stroke="#8a8474" stroke-width=".7"/><circle cx="652.9" cy="395.1" r=".9" fill="#6a655a"/>
<circle cx="652.9" cy="406.1" r="3.7" fill="#c6bfb0" stroke="#8a8474" stroke-width=".7"/><circle cx="652.9" cy="406.1" r=".9" fill="#6a655a"/>
<circle cx="652.9" cy="417.2" r="3.7" fill="#c6bfb0" stroke="#8a8474" stroke-width=".7"/><circle cx="652.9" cy="417.2" r=".9" fill="#6a655a"/>
<circle cx="652.9" cy="428.2" r="3.7" fill="#c6bfb0" stroke="#8a8474" stroke-width=".7"/><circle cx="652.9" cy="428.2" r=".9" fill="#6a655a"/>
<circle cx="652.9" cy="439.3" r="3.7" fill="#c6bfb0" stroke="#8a8474" stroke-width=".7"/><circle cx="652.9" cy="439.3" r=".9" fill="#6a655a"/>
<circle cx="652.9" cy="450.4" r="3.7" fill="#c6bfb0" stroke="#8a8474" stroke-width=".7"/><circle cx="652.9" cy="450.4" r=".9" fill="#6a655a"/>
<circle cx="652.9" cy="461.4" r="3.7" fill="#c6bfb0" stroke="#8a8474" stroke-width=".7"/><circle cx="652.9" cy="461.4" r=".9" fill="#6a655a"/>
<circle cx="663.9" cy="367.5" r="3.7" fill="#c6bfb0" stroke="#8a8474" stroke-width=".7"/><circle cx="663.9" cy="367.5" r=".9" fill="#6a655a"/>
<circle cx="663.9" cy="378.6" r="3.7" fill="#c6bfb0" stroke="#8a8474" stroke-width=".7"/><circle cx="663.9" cy="378.6" r=".9" fill="#6a655a"/>
<circle cx="663.9" cy="389.6" r="3.7" fill="#c6bfb0" stroke="#8a8474" stroke-width=".7"/><circle cx="663.9" cy="389.6" r=".9" fill="#6a655a"/>
<circle cx="663.9" cy="400.6" r="3.7" fill="#c6bfb0" stroke="#8a8474" stroke-width=".7"/><circle cx="663.9" cy="400.6" r=".9" fill="#6a655a"/>
<circle cx="663.9" cy="411.7" r="3.7" fill="#c6bfb0" stroke="#8a8474" stroke-width=".7"/><circle cx="663.9" cy="411.7" r=".9" fill="#6a655a"/>
<circle cx="663.9" cy="422.8" r="3.7" fill="#c6bfb0" stroke="#8a8474" stroke-width=".7"/><circle cx="663.9" cy="422.8" r=".9" fill="#6a655a"/>
<circle cx="663.9" cy="433.8" r="3.7" fill="#c6bfb0" stroke="#8a8474" stroke-width=".7"/><circle cx="663.9" cy="433.8" r=".9" fill="#6a655a"/>
<circle cx="663.9" cy="444.9" r="3.7" fill="#c6bfb0" stroke="#8a8474" stroke-width=".7"/><circle cx="663.9" cy="444.9" r=".9" fill="#6a655a"/>
<circle cx="663.9" cy="455.9" r="3.7" fill="#c6bfb0" stroke="#8a8474" stroke-width=".7"/><circle cx="663.9" cy="455.9" r=".9" fill="#6a655a"/>
<circle cx="663.9" cy="466.9" r="3.7" fill="#c6bfb0" stroke="#8a8474" stroke-width=".7"/><circle cx="663.9" cy="466.9" r=".9" fill="#6a655a"/>
<circle cx="675" cy="373.0" r="3.7" fill="#c6bfb0" stroke="#8a8474" stroke-width=".7"/><circle cx="675" cy="373.0" r=".9" fill="#6a655a"/>
<circle cx="675" cy="384.1" r="3.7" fill="#c6bfb0" stroke="#8a8474" stroke-width=".7"/><circle cx="675" cy="384.1" r=".9" fill="#6a655a"/>
<circle cx="675" cy="395.1" r="3.7" fill="#c6bfb0" stroke="#8a8474" stroke-width=".7"/><circle cx="675" cy="395.1" r=".9" fill="#6a655a"/>
<circle cx="675" cy="406.1" r="3.7" fill="#c6bfb0" stroke="#8a8474" stroke-width=".7"/><circle cx="675" cy="406.1" r=".9" fill="#6a655a"/>
<circle cx="675" cy="417.2" r="3.7" fill="#c6bfb0" stroke="#8a8474" stroke-width=".7"/><circle cx="675" cy="417.2" r=".9" fill="#6a655a"/>
<circle cx="675" cy="428.2" r="3.7" fill="#c6bfb0" stroke="#8a8474" stroke-width=".7"/><circle cx="675" cy="428.2" r=".9" fill="#6a655a"/>
<circle cx="675" cy="439.3" r="3.7" fill="#c6bfb0" stroke="#8a8474" stroke-width=".7"/><circle cx="675" cy="439.3" r=".9" fill="#6a655a"/>
<circle cx="675" cy="450.4" r="3.7" fill="#c6bfb0" stroke="#8a8474" stroke-width=".7"/><circle cx="675" cy="450.4" r=".9" fill="#6a655a"/>
<circle cx="675" cy="461.4" r="3.7" fill="#c6bfb0" stroke="#8a8474" stroke-width=".7"/><circle cx="675" cy="461.4" r=".9" fill="#6a655a"/>
<rect x="569" y="359" width="23" height="114.7" fill="none" stroke="#e02020" stroke-width="1" stroke-dasharray="1 1"/>
<rect x="637.3" y="427" width="44.2" height="46.4" fill="none" stroke="#e02020" stroke-width="1.2" stroke-dasharray="2.5 1.2"/>
<line x1="681.5" y1="427" x2="759.8" y2="375.4" stroke="#e02020" stroke-width="1"/>
<line x1="681.5" y1="473.4" x2="759.8" y2="490" stroke="#e02020" stroke-width="1"/>
<rect x="759.8" y="375.4" width="113.5" height="114.6" fill="#a4aec0"/>
<clipPath id="c2box"><rect x="759.8" y="375.4" width="113.5" height="114.6"/></clipPath>
<g clip-path="url(#c2box)">
<line x1="814.5" y1="375" x2="814.5" y2="432" stroke="#8c96a8" stroke-width="1.2"/>
<circle cx="773.4" cy="390.6" r="9.6" fill="#c4bdb0" stroke="#6e6a60" stroke-width=".9"/><circle cx="773.4" cy="390.6" r="7.2" fill="none" stroke="#968f80" stroke-width=".6"/><circle cx="773.4" cy="390.6" r="2.2" fill="none" stroke="#222" stroke-width=".9"/>
<circle cx="773.4" cy="418" r="9.6" fill="#c4bdb0" stroke="#6e6a60" stroke-width=".9"/><circle cx="773.4" cy="418" r="7.2" fill="none" stroke="#968f80" stroke-width=".6"/><circle cx="773.4" cy="418" r="2.2" fill="none" stroke="#222" stroke-width=".9"/>
<circle cx="773.4" cy="445.4" r="9.6" fill="#c4bdb0" stroke="#6e6a60" stroke-width=".9"/><circle cx="773.4" cy="445.4" r="7.2" fill="none" stroke="#968f80" stroke-width=".6"/><circle cx="773.4" cy="445.4" r="2.2" fill="none" stroke="#222" stroke-width=".9"/>
<circle cx="773.4" cy="472.8" r="9.6" fill="#c4bdb0" stroke="#6e6a60" stroke-width=".9"/><circle cx="773.4" cy="472.8" r="7.2" fill="none" stroke="#968f80" stroke-width=".6"/><circle cx="773.4" cy="472.8" r="2.2" fill="none" stroke="#222" stroke-width=".9"/>
<circle cx="801" cy="377.3" r="9.6" fill="#c4bdb0" stroke="#6e6a60" stroke-width=".9"/><circle cx="801" cy="377.3" r="7.2" fill="none" stroke="#968f80" stroke-width=".6"/><circle cx="801" cy="377.3" r="2.2" fill="none" stroke="#222" stroke-width=".9"/>
<circle cx="801" cy="404.2" r="9.6" fill="#c4bdb0" stroke="#6e6a60" stroke-width=".9"/><circle cx="801" cy="404.2" r="7.2" fill="none" stroke="#968f80" stroke-width=".6"/><circle cx="801" cy="404.2" r="2.2" fill="none" stroke="#222" stroke-width=".9"/>
<circle cx="801" cy="431.6" r="9.6" fill="#c4bdb0" stroke="#6e6a60" stroke-width=".9"/><circle cx="801" cy="431.6" r="7.2" fill="none" stroke="#968f80" stroke-width=".6"/><circle cx="801" cy="431.6" r="2.2" fill="none" stroke="#222" stroke-width=".9"/>
<circle cx="801" cy="459" r="9.6" fill="#c4bdb0" stroke="#6e6a60" stroke-width=".9"/><circle cx="801" cy="459" r="7.2" fill="none" stroke="#968f80" stroke-width=".6"/><circle cx="801" cy="459" r="2.2" fill="none" stroke="#222" stroke-width=".9"/>
<circle cx="828.4" cy="390.6" r="9.6" fill="#c4bdb0" stroke="#6e6a60" stroke-width=".9"/><circle cx="828.4" cy="390.6" r="7.2" fill="none" stroke="#968f80" stroke-width=".6"/><circle cx="828.4" cy="390.6" r="2.2" fill="none" stroke="#222" stroke-width=".9"/>
<circle cx="828.4" cy="418" r="9.6" fill="#c4bdb0" stroke="#6e6a60" stroke-width=".9"/><circle cx="828.4" cy="418" r="7.2" fill="none" stroke="#968f80" stroke-width=".6"/><circle cx="828.4" cy="418" r="2.2" fill="none" stroke="#222" stroke-width=".9"/>
<circle cx="828.4" cy="445.4" r="9.6" fill="#c4bdb0" stroke="#6e6a60" stroke-width=".9"/><circle cx="828.4" cy="445.4" r="7.2" fill="none" stroke="#968f80" stroke-width=".6"/><circle cx="828.4" cy="445.4" r="2.2" fill="none" stroke="#222" stroke-width=".9"/>
<circle cx="828.4" cy="472.8" r="9.6" fill="#c4bdb0" stroke="#6e6a60" stroke-width=".9"/><circle cx="828.4" cy="472.8" r="7.2" fill="none" stroke="#968f80" stroke-width=".6"/><circle cx="828.4" cy="472.8" r="2.2" fill="none" stroke="#222" stroke-width=".9"/>
<circle cx="855.8" cy="377.3" r="9.6" fill="#c4bdb0" stroke="#6e6a60" stroke-width=".9"/><circle cx="855.8" cy="377.3" r="7.2" fill="none" stroke="#968f80" stroke-width=".6"/><circle cx="855.8" cy="377.3" r="2.2" fill="none" stroke="#222" stroke-width=".9"/>
<circle cx="855.8" cy="404.2" r="9.6" fill="#c4bdb0" stroke="#6e6a60" stroke-width=".9"/><circle cx="855.8" cy="404.2" r="7.2" fill="none" stroke="#968f80" stroke-width=".6"/><circle cx="855.8" cy="404.2" r="2.2" fill="none" stroke="#222" stroke-width=".9"/>
<circle cx="855.8" cy="431.6" r="9.6" fill="#c4bdb0" stroke="#6e6a60" stroke-width=".9"/><circle cx="855.8" cy="431.6" r="7.2" fill="none" stroke="#968f80" stroke-width=".6"/><circle cx="855.8" cy="431.6" r="2.2" fill="none" stroke="#222" stroke-width=".9"/>
<circle cx="855.8" cy="459" r="9.6" fill="#c4bdb0" stroke="#6e6a60" stroke-width=".9"/><circle cx="855.8" cy="459" r="7.2" fill="none" stroke="#968f80" stroke-width=".6"/><circle cx="855.8" cy="459" r="2.2" fill="none" stroke="#222" stroke-width=".9"/>
</g>
<rect x="759.8" y="375.4" width="113.5" height="114.6" fill="none" stroke="#e02020" stroke-width="2" stroke-dasharray="4 2"/>
<line x1="754.5" y1="431.6" x2="893.9" y2="431.6" stroke="#222" stroke-width=".9" stroke-dasharray="5 2 1 2" fill="none"/>
<line x1="754.5" y1="459" x2="893.9" y2="459" stroke="#222" stroke-width=".9" stroke-dasharray="5 2 1 2" fill="none"/>
<line x1="828.4" y1="377" x2="828.4" y2="505.8" stroke="#222" stroke-width=".9" stroke-dasharray="5 2 1 2" fill="none"/>
<line x1="855.8" y1="377" x2="855.8" y2="505.8" stroke="#222" stroke-width=".9" stroke-dasharray="5 2 1 2" fill="none"/>
<line x1="883.7" y1="433" x2="883.7" y2="457.5" stroke="#111" stroke-width=".9"/>
<path d="M881.7 436 L883.7 432 L885.7 436 M881.7 454.5 L883.7 458.5 L885.7 454.5" fill="#111" stroke="#111" stroke-width=".6"/>
<text x="889.5" y="452.5" font-size="13" fill="#111">X<tspan font-size="8" dy="3">t</tspan></text>
<line x1="829.5" y1="495" x2="854.5" y2="495" stroke="#111" stroke-width=".9"/>
<path d="M832.5 493 L828.5 495 L832.5 497 M851.5 493 L855.5 495 L851.5 497" fill="#111" stroke="#111" stroke-width=".6"/>
<text x="835.5" y="517" font-size="13" fill="#111">X<tspan font-size="8" dy="3">l</tspan></text>
<line x1="704" y1="343" x2="661" y2="384" stroke="#111" stroke-width=".9"/><path d="M661 384 L663 379.5 L665.5 382 Z" fill="#111"/>
<text x="704.5" y="347.5" font-size="13" fill="#111">Baffle</text>
<line x1="542" y1="490" x2="580" y2="473.5" stroke="#111" stroke-width=".9"/><path d="M580 473.5 L575.5 477.5 L574.5 474.5 Z" fill="#111"/>
<text x="506.5" y="500" font-size="13" fill="#111">1 Section</text>
</svg>
<svg class="a" style="left:910px;top:326px" width="271" height="206" viewBox="910 326 271 206" font-family="Liberation Serif" font-weight="bold">
<g fill="#9599a6">
<rect x="1023.8" y="364.4" width="9" height="31.5"/><rect x="1045.5" y="364.4" width="9" height="31.5"/><rect x="1067" y="364.4" width="9.3" height="31.5"/><rect x="1089" y="364.4" width="9" height="31.5"/><rect x="1110.8" y="364.4" width="9" height="31.5"/>
<rect x="1015.9" y="395.3" width="112" height="4.7"/>
<rect x="1015.9" y="426" width="112" height="4.6"/>
<rect x="1023.8" y="430.5" width="9" height="30.8"/><rect x="1045.5" y="430.5" width="9" height="30.8"/><rect x="1067" y="430.5" width="9.3" height="30.8"/><rect x="1089" y="430.5" width="9" height="30.8"/><rect x="1110.8" y="430.5" width="9" height="30.8"/>
</g>
<g stroke="#111" stroke-width=".9" fill="none">
<line x1="987" y1="364.4" x2="1023.5" y2="364.4"/><line x1="987" y1="461.3" x2="1023.5" y2="461.3"/><line x1="998.2" y1="366" x2="998.2" y2="459.5"/>
<line x1="1128" y1="395.3" x2="1172" y2="395.3"/><line x1="1128" y1="430.5" x2="1172" y2="430.5"/><line x1="1161.5" y1="397" x2="1161.5" y2="403"/><line x1="1161.5" y1="423" x2="1161.5" y2="429"/>
<line x1="1128" y1="400" x2="1147.6" y2="400"/><line x1="1128" y1="426" x2="1147.6" y2="426"/><line x1="1139.5" y1="401.5" x2="1139.5" y2="405"/><line x1="1139.5" y1="421" x2="1139.5" y2="424.5"/>
<line x1="1110.6" y1="461.3" x2="1110.6" y2="478.3"/><line x1="1119.4" y1="461.3" x2="1119.4" y2="478.3"/><line x1="1103" y1="471" x2="1110" y2="471"/><line x1="1120" y1="471" x2="1127" y2="471"/>
</g>
<g fill="#111">
<path d="M996.5 368 L998.2 364.8 L999.9 368 Z M996.5 457.7 L998.2 460.9 L999.9 457.7 Z"/>
<path d="M1159.8 398.5 L1161.5 395.7 L1163.2 398.5 Z M1159.8 427.3 L1161.5 430.1 L1163.2 427.3 Z"/>
<path d="M1138 403 L1139.5 400.4 L1141 403 Z M1138 423 L1139.5 425.6 L1141 423 Z"/>
<path d="M1107.5 469.5 L1110.3 471 L1107.5 472.5 Z M1122.5 469.5 L1119.7 471 L1122.5 472.5 Z"/>
</g>
<g fill="#111">
<text x="921.3" y="420.5" font-size="12.6">Fin diameter</text>
<text x="1100" y="418" font-size="11.6">Tube diameters</text>
<text x="1080" y="493.5" font-size="12.2">Fin thickness</text>
</g>
</svg>

<div class="t" style="left:110px;top:559px;word-spacing:2.5px">Evaporator length</div>
<div class="box" style="left:288px;top:554px;width:106px;height:27px;border-radius:4px"></div>
<div class="t" style="right:1553px;top:560px">0.43</div>
<svg class="a" style="left:373px;top:559.5px" width="10" height="16" viewBox="-1 -1 10 16"><path d="M0 4 L4 0 L8 4 M0 9.5 L4 13.5 L8 9.5" fill="none" stroke="#333" stroke-width="1.1"/></svg>
<div class="box" style="left:400px;top:554px;width:68px;height:27px;border-radius:4px"></div>
<div class="t" style="left:407px;top:560px">m</div>
<svg class="a" style="left:447.5px;top:564.5px" width="10" height="6.0" viewBox="-1 -1 10 6.0"><path d="M0 0 L4.0 4.0 L8 0" fill="none" stroke="#333" stroke-width="1.1"/></svg>
<div class="t" style="left:110px;top:593px;word-spacing:2.5px">Condenser length</div>
<div class="box" style="left:288px;top:588px;width:106px;height:27px;border-radius:4px"></div>
<div class="t" style="right:1553px;top:594px">0.43</div>
<svg class="a" style="left:373px;top:593.5px" width="10" height="16" viewBox="-1 -1 10 16"><path d="M0 4 L4 0 L8 4 M0 9.5 L4 13.5 L8 9.5" fill="none" stroke="#333" stroke-width="1.1"/></svg>
<div class="box" style="left:400px;top:588px;width:68px;height:27px;border-radius:4px"></div>
<div class="t" style="left:407px;top:594px">m</div>
<svg class="a" style="left:447.5px;top:598.5px" width="10" height="6.0" viewBox="-1 -1 10 6.0"><path d="M0 0 L4.0 4.0 L8 0" fill="none" stroke="#333" stroke-width="1.1"/></svg>
<div class="t" style="left:110px;top:627px;word-spacing:2.5px">Flow length</div>
<div class="box" style="left:288px;top:622px;width:106px;height:27px;border-radius:4px"></div>
<div class="t" style="right:1553px;top:628px">0.6</div>
<svg class="a" style="left:373px;top:627.5px" width="10" height="16" viewBox="-1 -1 10 16"><path d="M0 4 L4 0 L8 4 M0 9.5 L4 13.5 L8 9.5" fill="none" stroke="#333" stroke-width="1.1"/></svg>
<div class="box" style="left:400px;top:622px;width:68px;height:27px;border-radius:4px"></div>
<div class="t" style="left:407px;top:628px">m</div>
<svg class="a" style="left:447.5px;top:632.5px" width="10" height="6.0" viewBox="-1 -1 10 6.0"><path d="M0 0 L4.0 4.0 L8 0" fill="none" stroke="#333" stroke-width="1.1"/></svg>
<div class="t" style="left:110px;top:661px;word-spacing:2.5px">Perpendicular length</div>
<div class="box" style="left:288px;top:656px;width:106px;height:27px;border-radius:4px"></div>
<div class="t" style="right:1553px;top:662px">0.72</div>
<svg class="a" style="left:373px;top:661.5px" width="10" height="16" viewBox="-1 -1 10 16"><path d="M0 4 L4 0 L8 4 M0 9.5 L4 13.5 L8 9.5" fill="none" stroke="#333" stroke-width="1.1"/></svg>
<div class="box" style="left:400px;top:656px;width:68px;height:27px;border-radius:4px"></div>
<div class="t" style="left:407px;top:662px">m</div>
<svg class="a" style="left:447.5px;top:666.5px" width="10" height="6.0" viewBox="-1 -1 10 6.0"><path d="M0 0 L4.0 4.0 L8 0" fill="none" stroke="#333" stroke-width="1.1"/></svg>
<div class="t" style="left:110px;top:695px;word-spacing:2.5px">Separating plate thickness</div>
<div class="box" style="left:288px;top:690px;width:106px;height:27px;border-radius:4px"></div>
<div class="t" style="right:1553px;top:696px">0</div>
<svg class="a" style="left:373px;top:695.5px" width="10" height="16" viewBox="-1 -1 10 16"><path d="M0 4 L4 0 L8 4 M0 9.5 L4 13.5 L8 9.5" fill="none" stroke="#333" stroke-width="1.1"/></svg>
<div class="box" style="left:400px;top:690px;width:68px;height:27px;border-radius:4px"></div>
<div class="t" style="left:407px;top:696px">m</div>
<svg class="a" style="left:447.5px;top:700.5px" width="10" height="6.0" viewBox="-1 -1 10 6.0"><path d="M0 0 L4.0 4.0 L8 0" fill="none" stroke="#333" stroke-width="1.1"/></svg>
<div class="t" style="left:110px;top:729px;word-spacing:2.5px">No. of evaporator sections</div>
<div class="box" style="left:288px;top:724px;width:180px;height:27px;border-radius:4px"></div>
<div class="t" style="right:1479px;top:730px">1</div>
<svg class="a" style="left:447px;top:729.5px" width="10" height="16" viewBox="-1 -1 10 16"><path d="M0 4 L4 0 L8 4 M0 9.5 L4 13.5 L8 9.5" fill="none" stroke="#333" stroke-width="1.1"/></svg>
<div class="t" style="left:110px;top:763px;word-spacing:2.5px">No. of condenser sections</div>
<div class="box" style="left:288px;top:758px;width:180px;height:27px;border-radius:4px"></div>
<div class="t" style="right:1479px;top:764px">1</div>
<svg class="a" style="left:447px;top:763.5px" width="10" height="16" viewBox="-1 -1 10 16"><path d="M0 4 L4 0 L8 4 M0 9.5 L4 13.5 L8 9.5" fill="none" stroke="#333" stroke-width="1.1"/></svg>
<div class="t" style="left:110px;top:797px;word-spacing:2.5px">Evaporator baffle length</div>
<div class="box" style="left:288px;top:792px;width:106px;height:27px;border-radius:4px"></div>
<div class="t" style="right:1553px;top:798px">0</div>
<svg class="a" style="left:373px;top:797.5px" width="10" height="16" viewBox="-1 -1 10 16"><path d="M0 4 L4 0 L8 4 M0 9.5 L4 13.5 L8 9.5" fill="none" stroke="#333" stroke-width="1.1"/></svg>
<div class="box" style="left:400px;top:792px;width:68px;height:27px;border-radius:4px"></div>
<div class="t" style="left:407px;top:798px">m</div>
<svg class="a" style="left:447.5px;top:802.5px" width="10" height="6.0" viewBox="-1 -1 10 6.0"><path d="M0 0 L4.0 4.0 L8 0" fill="none" stroke="#333" stroke-width="1.1"/></svg>
<div class="t" style="left:110px;top:831px;word-spacing:2.5px">Condenser baffle length</div>
<div class="box" style="left:288px;top:826px;width:106px;height:27px;border-radius:4px"></div>
<div class="t" style="right:1553px;top:832px">0</div>
<svg class="a" style="left:373px;top:831.5px" width="10" height="16" viewBox="-1 -1 10 16"><path d="M0 4 L4 0 L8 4 M0 9.5 L4 13.5 L8 9.5" fill="none" stroke="#333" stroke-width="1.1"/></svg>
<div class="box" style="left:400px;top:826px;width:68px;height:27px;border-radius:4px"></div>
<div class="t" style="left:407px;top:832px">m</div>
<svg class="a" style="left:447.5px;top:836.5px" width="10" height="6.0" viewBox="-1 -1 10 6.0"><path d="M0 0 L4.0 4.0 L8 0" fill="none" stroke="#333" stroke-width="1.1"/></svg>
<div class="grp" style="left:506px;top:553px;width:670px;height:217px"></div>
<div class="a" style="left:507px;top:554px;width:668px;height:26px;background:#f9f9f9;border-radius:3px 3px 0 0"></div>
<div class="a" style="left:507px;top:580px;width:668px;height:1px;background:#dadada"></div>
<div class="t" style="left:521px;top:560px;font-size:14.5px;font-weight:bold;line-height:17px">Size Parameters</div>
<div class="t" style="left:844px;top:589px;font-size:12.7px;font-weight:bold">Tube diameter</div>
<div class="t" style="left:522px;top:616px;word-spacing:2.5px">X<span style="font-size:10px;position:relative;top:3px">t</span></div>
<div class="box" style="left:651px;top:611px;width:113px;height:27px;border-radius:4px"></div>
<div class="t" style="right:1183px;top:617px">0.02</div>
<svg class="a" style="left:743px;top:616.5px" width="10" height="16" viewBox="-1 -1 10 16"><path d="M0 4 L4 0 L8 4 M0 9.5 L4 13.5 L8 9.5" fill="none" stroke="#333" stroke-width="1.1"/></svg>
<div class="box" style="left:770px;top:611px;width:67px;height:27px;border-radius:4px"></div>
<div class="t" style="left:777px;top:617px">m</div>
<svg class="a" style="left:816.5px;top:621.5px" width="10" height="6.0" viewBox="-1 -1 10 6.0"><path d="M0 0 L4.0 4.0 L8 0" fill="none" stroke="#333" stroke-width="1.1"/></svg>
<div class="t" style="left:844px;top:616px;word-spacing:2.5px">Inner diameter</div>
<div class="box" style="left:972px;top:611px;width:114px;height:27px;border-radius:4px"></div>
<div class="t" style="right:861px;top:617px">0.01428</div>
<svg class="a" style="left:1065px;top:616.5px" width="10" height="16" viewBox="-1 -1 10 16"><path d="M0 4 L4 0 L8 4 M0 9.5 L4 13.5 L8 9.5" fill="none" stroke="#333" stroke-width="1.1"/></svg>
<div class="box" style="left:1092px;top:611px;width:67px;height:27px;border-radius:4px"></div>
<div class="t" style="left:1099px;top:617px">m</div>
<svg class="a" style="left:1138.5px;top:621.5px" width="10" height="6.0" viewBox="-1 -1 10 6.0"><path d="M0 0 L4.0 4.0 L8 0" fill="none" stroke="#333" stroke-width="1.1"/></svg>
<div class="t" style="left:522px;top:650px;word-spacing:2.5px">X<span style="font-size:10px;position:relative;top:3px">l</span></div>
<div class="box" style="left:651px;top:645px;width:113px;height:27px;border-radius:4px"></div>
<div class="t" style="right:1183px;top:651px">0.02</div>
<svg class="a" style="left:743px;top:650.5px" width="10" height="16" viewBox="-1 -1 10 16"><path d="M0 4 L4 0 L8 4 M0 9.5 L4 13.5 L8 9.5" fill="none" stroke="#333" stroke-width="1.1"/></svg>
<div class="box" style="left:770px;top:645px;width:67px;height:27px;border-radius:4px"></div>
<div class="t" style="left:777px;top:651px">m</div>
<svg class="a" style="left:816.5px;top:655.5px" width="10" height="6.0" viewBox="-1 -1 10 6.0"><path d="M0 0 L4.0 4.0 L8 0" fill="none" stroke="#333" stroke-width="1.1"/></svg>
<div class="t" style="left:844px;top:650px;word-spacing:2.5px">Outer diameter</div>
<div class="box" style="left:972px;top:645px;width:114px;height:27px;border-radius:4px"></div>
<div class="t" style="right:861px;top:651px">0.01588</div>
<svg class="a" style="left:1065px;top:650.5px" width="10" height="16" viewBox="-1 -1 10 16"><path d="M0 4 L4 0 L8 4 M0 9.5 L4 13.5 L8 9.5" fill="none" stroke="#333" stroke-width="1.1"/></svg>
<div class="box" style="left:1092px;top:645px;width:67px;height:27px;border-radius:4px"></div>
<div class="t" style="left:1099px;top:651px">m</div>
<svg class="a" style="left:1138.5px;top:655.5px" width="10" height="6.0" viewBox="-1 -1 10 6.0"><path d="M0 0 L4.0 4.0 L8 0" fill="none" stroke="#333" stroke-width="1.1"/></svg>
<div class="t" style="left:522px;top:678px;font-size:12.7px;font-weight:bold">Fin thickness</div>
<div class="t" style="left:844px;top:678px;font-size:12.7px;font-weight:bold">Fin diameter</div>
<div class="t" style="left:522px;top:705px;word-spacing:2.5px">Evaporator</div>
<div class="box" style="left:651px;top:700px;width:113px;height:27px;border-radius:4px"></div>
<div class="t" style="right:1183px;top:706px">0.8</div>
<svg class="a" style="left:743px;top:705.5px" width="10" height="16" viewBox="-1 -1 10 16"><path d="M0 4 L4 0 L8 4 M0 9.5 L4 13.5 L8 9.5" fill="none" stroke="#333" stroke-width="1.1"/></svg>
<div class="box" style="left:770px;top:700px;width:67px;height:27px;border-radius:4px"></div>
<div class="t" style="left:777px;top:706px">mm</div>
<svg class="a" style="left:816.5px;top:710.5px" width="10" height="6.0" viewBox="-1 -1 10 6.0"><path d="M0 0 L4.0 4.0 L8 0" fill="none" stroke="#333" stroke-width="1.1"/></svg>
<div class="t" style="left:844px;top:705px;word-spacing:2.5px">Evaporator</div>
<div class="box" style="left:972px;top:700px;width:114px;height:27px;border-radius:4px"></div>
<div class="t" style="right:861px;top:706px">0.02</div>
<svg class="a" style="left:1065px;top:705.5px" width="10" height="16" viewBox="-1 -1 10 16"><path d="M0 4 L4 0 L8 4 M0 9.5 L4 13.5 L8 9.5" fill="none" stroke="#333" stroke-width="1.1"/></svg>
<div class="box" style="left:1092px;top:700px;width:67px;height:27px;border-radius:4px"></div>
<div class="t" style="left:1099px;top:706px">m</div>
<svg class="a" style="left:1138.5px;top:710.5px" width="10" height="6.0" viewBox="-1 -1 10 6.0"><path d="M0 0 L4.0 4.0 L8 0" fill="none" stroke="#333" stroke-width="1.1"/></svg>
<div class="t" style="left:522px;top:739px;word-spacing:2.5px">Condenser</div>
<div class="box" style="left:651px;top:734px;width:113px;height:27px;border-radius:4px"></div>
<div class="t" style="right:1183px;top:740px">0.8</div>
<svg class="a" style="left:743px;top:739.5px" width="10" height="16" viewBox="-1 -1 10 16"><path d="M0 4 L4 0 L8 4 M0 9.5 L4 13.5 L8 9.5" fill="none" stroke="#333" stroke-width="1.1"/></svg>
<div class="box" style="left:770px;top:734px;width:67px;height:27px;border-radius:4px"></div>
<div class="t" style="left:777px;top:740px">mm</div>
<svg class="a" style="left:816.5px;top:744.5px" width="10" height="6.0" viewBox="-1 -1 10 6.0"><path d="M0 0 L4.0 4.0 L8 0" fill="none" stroke="#333" stroke-width="1.1"/></svg>
<div class="t" style="left:844px;top:739px;word-spacing:2.5px">Condenser</div>
<div class="box" style="left:972px;top:734px;width:114px;height:27px;border-radius:4px"></div>
<div class="t" style="right:861px;top:740px">0.02</div>
<svg class="a" style="left:1065px;top:739.5px" width="10" height="16" viewBox="-1 -1 10 16"><path d="M0 4 L4 0 L8 4 M0 9.5 L4 13.5 L8 9.5" fill="none" stroke="#333" stroke-width="1.1"/></svg>
<div class="box" style="left:1092px;top:734px;width:67px;height:27px;border-radius:4px"></div>
<div class="t" style="left:1099px;top:740px">m</div>
<svg class="a" style="left:1138.5px;top:744.5px" width="10" height="6.0" viewBox="-1 -1 10 6.0"><path d="M0 0 L4.0 4.0 L8 0" fill="none" stroke="#333" stroke-width="1.1"/></svg>
<div class="grp" style="left:506px;top:776px;width:670px;height:237px"></div>
<div class="a" style="left:507px;top:777px;width:668px;height:26px;background:#f9f9f9;border-radius:3px 3px 0 0"></div>
<div class="a" style="left:507px;top:803px;width:668px;height:1px;background:#dadada"></div>
<div class="t" style="left:521px;top:783px;font-size:14.5px;font-weight:bold;line-height:17px">Specifications</div>
<div class="t" style="left:844px;top:812px;font-size:12.7px;font-weight:bold">Fin density</div>
<div class="t" style="left:522px;top:839px;word-spacing:2.5px">Tube material</div>
<div class="box" style="left:651px;top:834px;width:186px;height:27px;border-radius:4px"></div>
<div class="t" style="left:658px;top:840px">STS</div>
<svg class="a" style="left:816.5px;top:844.5px" width="10" height="6.0" viewBox="-1 -1 10 6.0"><path d="M0 0 L4.0 4.0 L8 0" fill="none" stroke="#333" stroke-width="1.1"/></svg>
<div class="t" style="left:522px;top:873px;word-spacing:2.5px">Fin material</div>
<div class="box" style="left:651px;top:868px;width:186px;height:27px;border-radius:4px"></div>
<div class="t" style="left:658px;top:874px">Al</div>
<svg class="a" style="left:816.5px;top:878.5px" width="10" height="6.0" viewBox="-1 -1 10 6.0"><path d="M0 0 L4.0 4.0 L8 0" fill="none" stroke="#333" stroke-width="1.1"/></svg>
<div class="t" style="left:522px;top:907px;word-spacing:2.5px">Working fluid</div>
<div class="box" style="left:651px;top:902px;width:186px;height:27px;border-radius:4px"></div>
<div class="t" style="left:658px;top:908px">Ethanol</div>
<svg class="a" style="left:816.5px;top:912.5px" width="10" height="6.0" viewBox="-1 -1 10 6.0"><path d="M0 0 L4.0 4.0 L8 0" fill="none" stroke="#333" stroke-width="1.1"/></svg>
<div class="t" style="left:522px;top:941px;word-spacing:2.5px">Tube arrangement</div>
<div class="box" style="left:651px;top:936px;width:186px;height:27px;border-radius:4px"></div>
<div class="t" style="left:658px;top:942px">Staggered</div>
<svg class="a" style="left:816.5px;top:946.5px" width="10" height="6.0" viewBox="-1 -1 10 6.0"><path d="M0 0 L4.0 4.0 L8 0" fill="none" stroke="#333" stroke-width="1.1"/></svg>
<div class="t" style="left:844px;top:839px">Evaporator</div>
<div class="box" style="left:972px;top:834px;width:114px;height:27px;border-radius:4px"></div>
<div class="t" style="right:861px;top:840px">9</div>
<svg class="a" style="left:1065px;top:839.5px" width="10" height="16" viewBox="-1 -1 10 16"><path d="M0 4 L4 0 L8 4 M0 9.5 L4 13.5 L8 9.5" fill="none" stroke="#333" stroke-width="1.1"/></svg>
<div class="box" style="left:1092px;top:834px;width:67px;height:27px;border-radius:4px"></div>
<div class="t" style="left:1099px;top:840px">FPI</div>
<svg class="a" style="left:1138.5px;top:844.5px" width="10" height="6.0" viewBox="-1 -1 10 6.0"><path d="M0 0 L4.0 4.0 L8 0" fill="none" stroke="#333" stroke-width="1.1"/></svg>
<div class="t" style="left:844px;top:873px">Condenser</div>
<div class="box" style="left:972px;top:868px;width:114px;height:27px;border-radius:4px"></div>
<div class="t" style="right:861px;top:874px">9</div>
<svg class="a" style="left:1065px;top:873.5px" width="10" height="16" viewBox="-1 -1 10 16"><path d="M0 4 L4 0 L8 4 M0 9.5 L4 13.5 L8 9.5" fill="none" stroke="#333" stroke-width="1.1"/></svg>
<div class="box" style="left:1092px;top:868px;width:67px;height:27px;border-radius:4px"></div>
<div class="t" style="left:1099px;top:874px">FPI</div>
<svg class="a" style="left:1138.5px;top:878.5px" width="10" height="6.0" viewBox="-1 -1 10 6.0"><path d="M0 0 L4.0 4.0 L8 0" fill="none" stroke="#333" stroke-width="1.1"/></svg>
<div class="t" style="left:844px;top:901px;font-size:11.5px;line-height:13px;word-spacing:0px">Clearance between fin and<br>horizontal casting wall</div>
<div class="box" style="left:990px;top:902px;width:96px;height:27px;border-radius:4px"></div>
<div class="t" style="right:861px;top:908px">0</div>
<svg class="a" style="left:1065px;top:907.5px" width="10" height="16" viewBox="-1 -1 10 16"><path d="M0 4 L4 0 L8 4 M0 9.5 L4 13.5 L8 9.5" fill="none" stroke="#333" stroke-width="1.1"/></svg>
<div class="box" style="left:1092px;top:902px;width:67px;height:27px;border-radius:4px"></div>
<div class="t" style="left:1099px;top:908px">m</div>
<svg class="a" style="left:1138.5px;top:912.5px" width="10" height="6.0" viewBox="-1 -1 10 6.0"><path d="M0 0 L4.0 4.0 L8 0" fill="none" stroke="#333" stroke-width="1.1"/></svg>
<div class="t" style="left:844px;top:935px;font-size:11.5px;line-height:13px;word-spacing:0px">Clearance at front fin and<br>horizontal casting wall</div>
<div class="box" style="left:990px;top:936px;width:96px;height:27px;border-radius:4px"></div>
<div class="t" style="right:861px;top:942px">0</div>
<svg class="a" style="left:1065px;top:941.5px" width="10" height="16" viewBox="-1 -1 10 16"><path d="M0 4 L4 0 L8 4 M0 9.5 L4 13.5 L8 9.5" fill="none" stroke="#333" stroke-width="1.1"/></svg>
<div class="box" style="left:1092px;top:936px;width:67px;height:27px;border-radius:4px"></div>
<div class="t" style="left:1099px;top:942px">m</div>
<svg class="a" style="left:1138.5px;top:946.5px" width="10" height="6.0" viewBox="-1 -1 10 6.0"><path d="M0 0 L4.0 4.0 L8 0" fill="none" stroke="#333" stroke-width="1.1"/></svg>
</body></html>
